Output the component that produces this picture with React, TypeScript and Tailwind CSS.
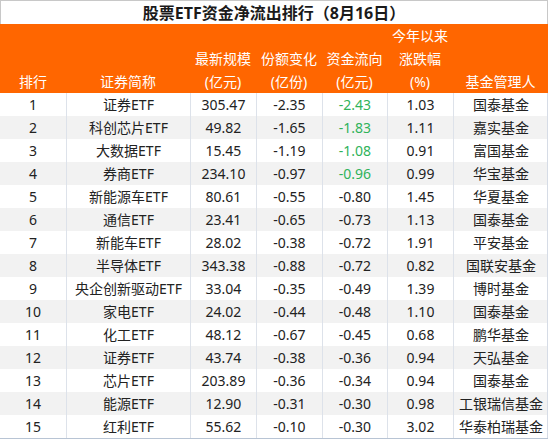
import React from "react";

type Row = [string, string, string, string, string, string, string, boolean];

const rows: Row[] = [
  ["1", "证券ETF", "305.47", "-2.35", "-2.43", "1.03", "国泰基金", true],
  ["2", "科创芯片ETF", "49.82", "-1.65", "-1.83", "1.11", "嘉实基金", true],
  ["3", "大数据ETF", "15.45", "-1.19", "-1.08", "0.91", "富国基金", true],
  ["4", "券商ETF", "234.10", "-0.97", "-0.96", "0.99", "华宝基金", true],
  ["5", "新能源车ETF", "80.61", "-0.55", "-0.80", "1.45", "华夏基金", false],
  ["6", "通信ETF", "23.41", "-0.65", "-0.73", "1.13", "国泰基金", false],
  ["7", "新能车ETF", "28.02", "-0.38", "-0.72", "1.91", "平安基金", false],
  ["8", "半导体ETF", "343.38", "-0.88", "-0.72", "0.82", "国联安基金", false],
  ["9", "央企创新驱动ETF", "33.04", "-0.35", "-0.49", "1.39", "博时基金", false],
  ["10", "家电ETF", "24.02", "-0.44", "-0.48", "1.10", "国泰基金", false],
  ["11", "化工ETF", "48.12", "-0.67", "-0.45", "0.68", "鹏华基金", false],
  ["12", "证券ETF", "43.74", "-0.38", "-0.36", "0.94", "天弘基金", false],
  ["13", "芯片ETF", "203.89", "-0.36", "-0.34", "0.94", "国泰基金", false],
  ["14", "能源ETF", "12.90", "-0.31", "-0.30", "0.98", "工银瑞信基金", false],
  ["15", "红利ETF", "55.62", "-0.10", "-0.30", "3.02", "华泰柏瑞基金", false],
];

const cols = "grid grid-cols-[66px_124px_66px_66px_65px_66px_95px]";

const headers: [string, string, string][] = [
  ["", "", "排行"],
  ["", "", "证券简称"],
  ["", "最新规模", "(亿元)"],
  ["", "份额变化", "(亿份)"],
  ["", "资金流向", "(亿元)"],
  ["今年以来", "涨跌幅", "(%)"],
  ["", "", "基金管理人"],
];

export default function App() {
  return (
    <div
      className="w-[550px] h-[439px] bg-white overflow-hidden"
      style={{ fontFamily: '"Noto Sans", "Noto Sans CJK SC", sans-serif' }}
    >
      <div className="w-[548px]">
        <div className="h-[24px] border-l border-r border-t border-[#c8c8c8] flex items-center justify-center text-[16px] font-bold text-[#1a1a1a] leading-none">
          股票ETF资金净流出排行（8月16日）
        </div>
        <div className={`${cols} bg-[#ff6600] text-white text-[14px] h-[69px]`}>
          {headers.map((h, i) => (
            <div key={i} className="flex flex-col">
              {h.map((t, j) => (
                <div key={j} className="h-[23px] flex items-center justify-center leading-none">
                  {t}
                </div>
              ))}
            </div>
          ))}
        </div>
        <div className="border-b border-[#b8c4d4]">
          {rows.map((r, i) => (
            <div
              key={i}
              className={`${cols} h-[23px] text-[14px] text-[#222222] leading-none ${
                i % 2 === 1 ? "bg-[#f2f2f2]" : "bg-white"
              } border-r border-[#d6dce6]`}
            >
              {r.slice(0, 7).map((c, j) => (
                <div
                  key={j}
                  className={`flex items-center justify-center ${
                    j > 0 ? "border-l border-[#dde2ea]" : ""
                  } ${j === 4 && r[7] ? "text-[#2fb35a]" : ""}`}
                >
                  {c as string}
                </div>
              ))}
            </div>
          ))}
        </div>
      </div>
    </div>
  );
}
